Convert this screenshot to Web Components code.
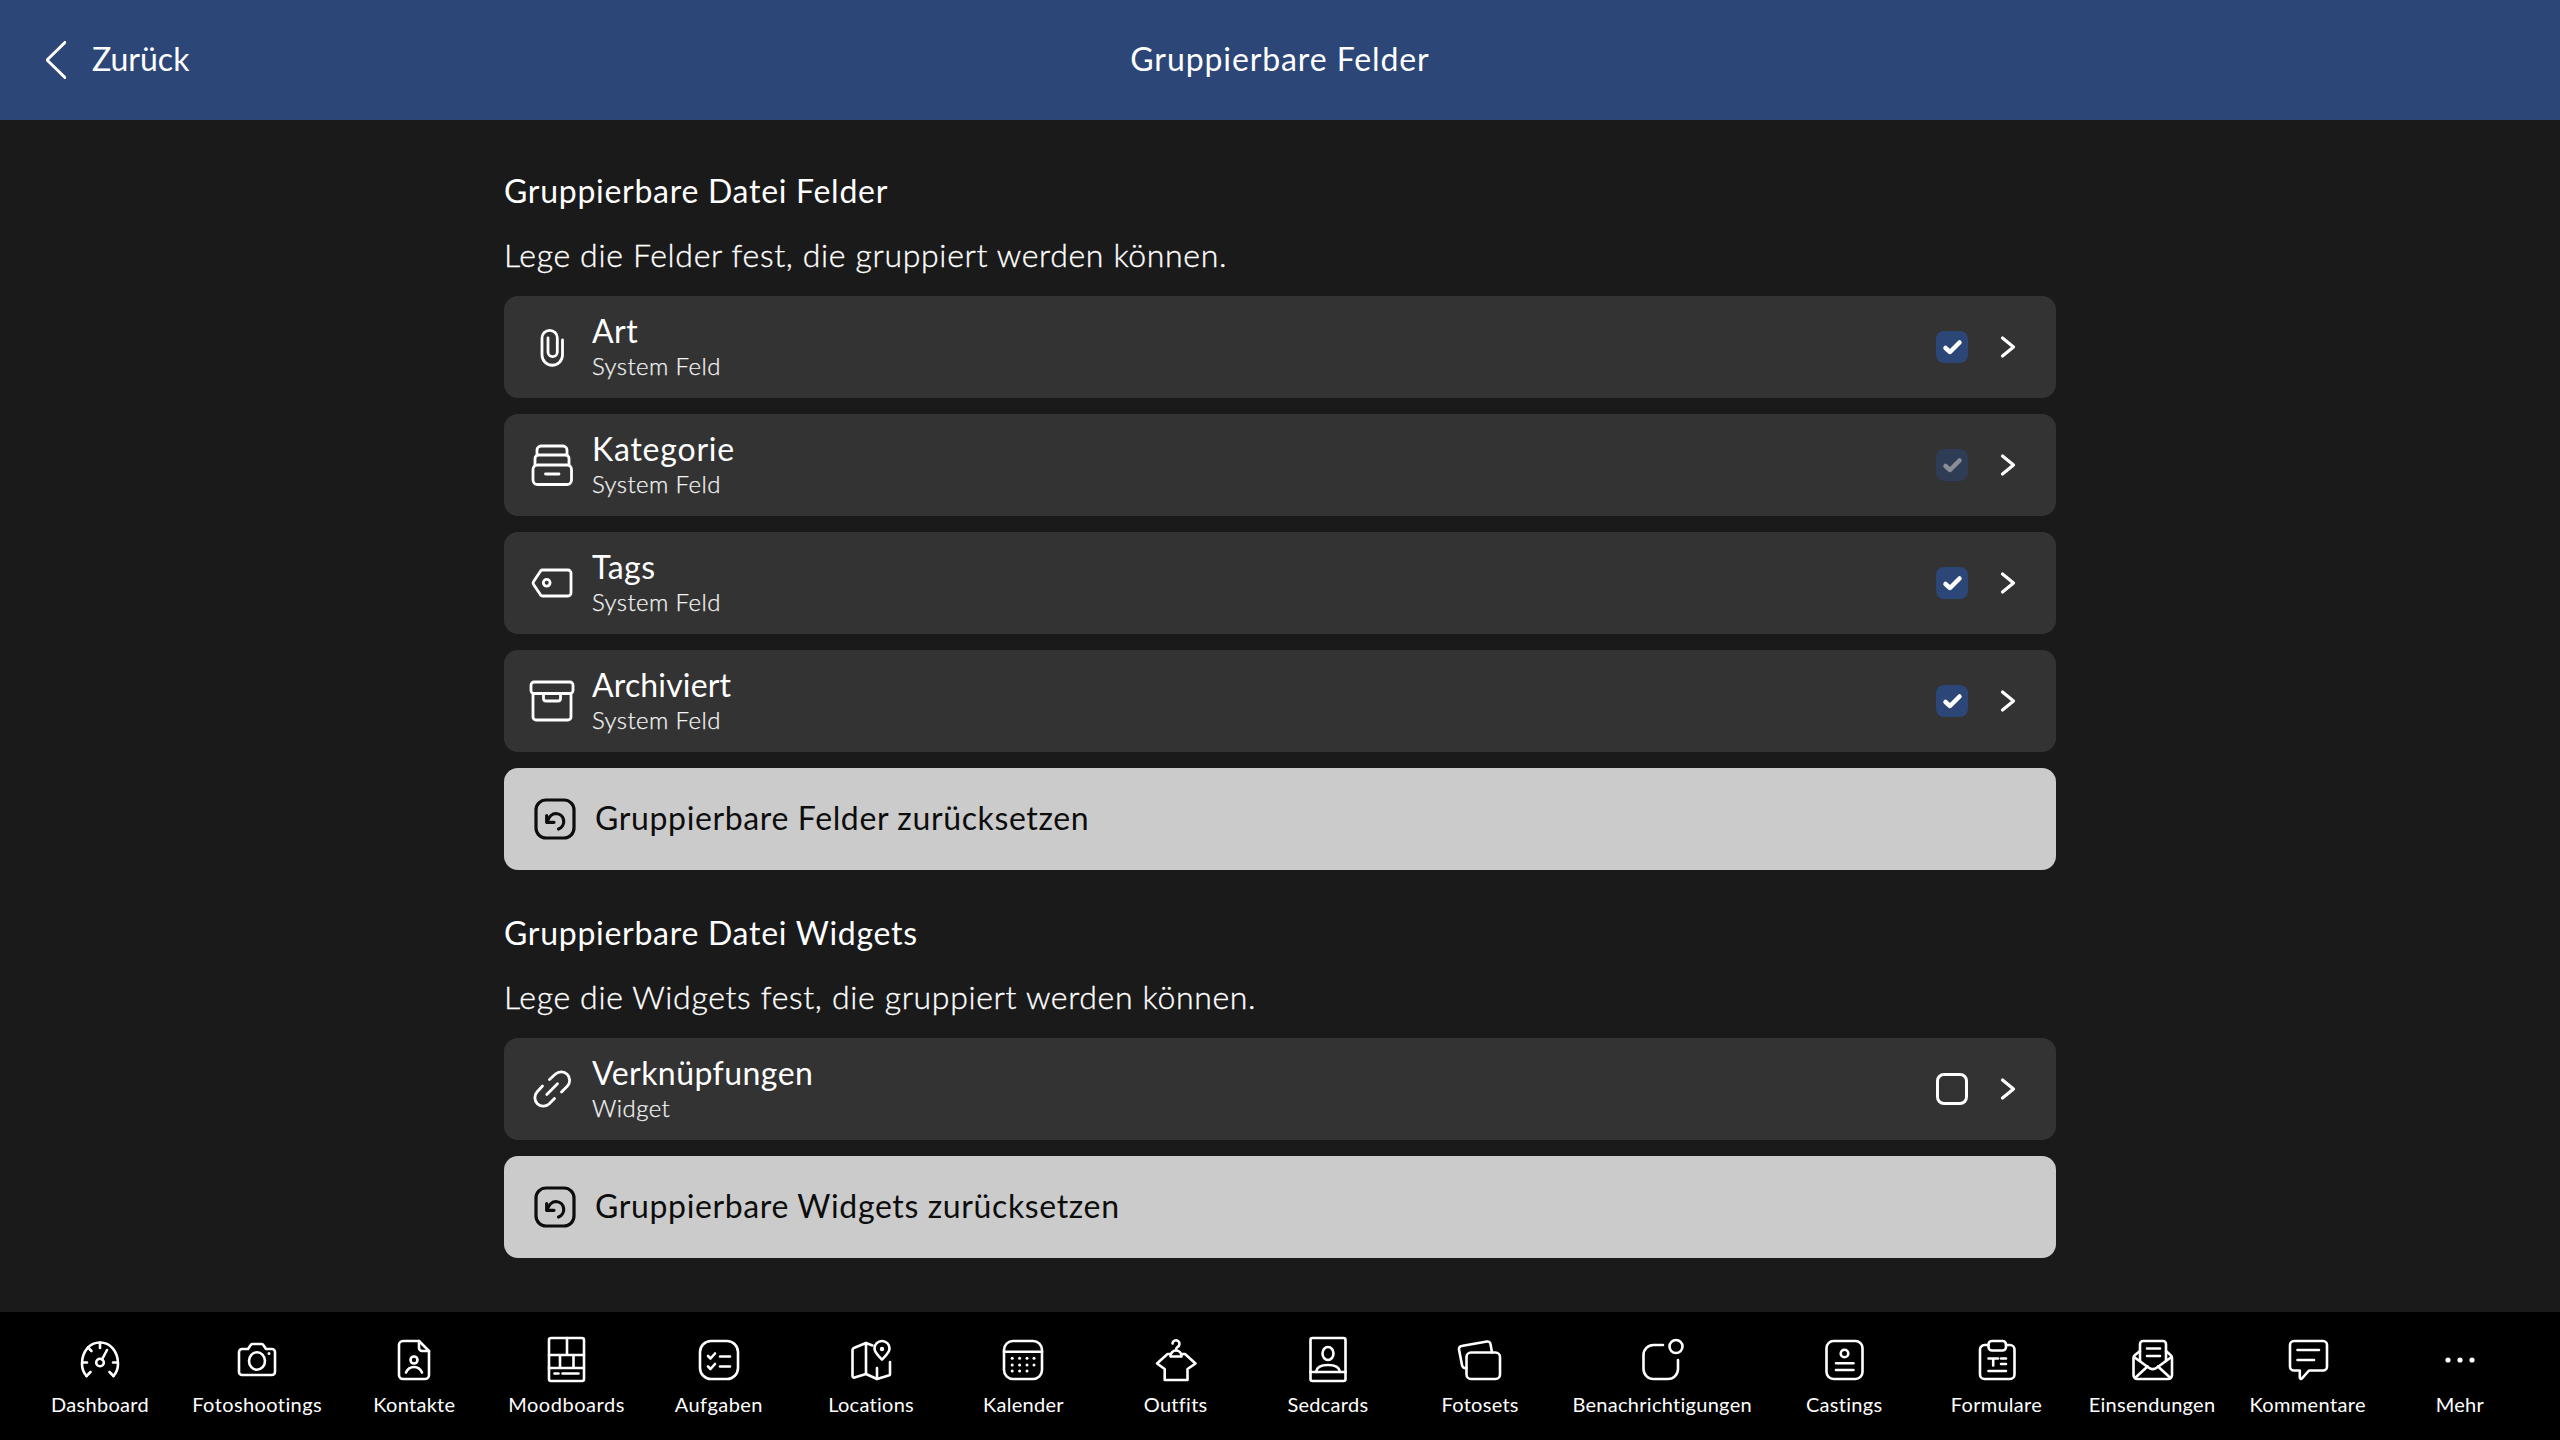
<!doctype html>
<html lang="de"><head><meta charset="utf-8"><title>Gruppierbare Felder</title>
<style>html,body{margin:0;height:100%;background:#1a1a1a;color:#fff;font-family:Lato,"Liberation Sans",sans-serif}
svg.i{width:48px;height:48px;display:block;overflow:visible;fill:none;stroke:currentColor;stroke-width:2.6;stroke-linecap:round;stroke-linejoin:round}
field-row svg.i{stroke-width:2.8}
svg.i .f{fill:currentColor;stroke:none}</style></head><body>
<app-shell>
  <top-bar slot="top" title-text="Gruppierbare Felder" back="Zurück"></top-bar>
  <settings-section heading="Gruppierbare Datei Felder" description="Lege die Felder fest, die gruppiert werden können.">
    <field-row label="Art" sub="System Feld" state="on"><svg class="i" viewBox="0 0 48 48"><path d="M34.5 17V32a10.25 10.25 0 0 1-20.5 0V15a7.65 7.65 0 0 1 15.3 0V29a4.65 4.65 0 0 1-9.3 0V15"/></svg></field-row>
    <field-row label="Kategorie" sub="System Feld" state="dim" style="--ls:.8px"><svg class="i" viewBox="0 0 48 48"><path d="M9 14V9a4 4 0 0 1 4-4H35a4 4 0 0 1 4 4V14"/><path d="M7 24V17.5a3.5 3.5 0 0 1 3.5-3.5H37.500a3.500 3.500 0 0 1 3.500 3.500V24"/><rect x="5" y="24" width="38.500" height="19.500" rx="4.500"/><path d="M17.500 33H31"/></svg></field-row>
    <field-row label="Tags" sub="System Feld" state="on"><svg class="i" viewBox="0 0 48 48"><path d="M14.500 11H40a3 3 0 0 1 3 3V34a3 3 0 0 1-3 3H14.500a2.500 2.500 0 0 1-1.900-.9L5.600 25.500a2.500 2.500 0 0 1 0-3L12.600 11.900A2.500 2.500 0 0 1 14.500 11z"/><circle cx="18.700" cy="23.800" r="3.400"/></svg></field-row>
    <field-row label="Archiviert" sub="System Feld" state="on" style="--ls:.15px"><svg class="i" viewBox="0 0 48 48"><rect x="3" y="5" width="42" height="11.500" rx="3"/><path d="M5 16.500V40a3 3 0 0 0 3 3H40a3 3 0 0 0 3-3V16.500"/><path d="M15.500 16.500V21.500a2.500 2.500 0 0 0 2.500 2.500H30a2.500 2.500 0 0 0 2.500-2.500V16.500"/></svg></field-row>
    <reset-button label="Gruppierbare Felder zurücksetzen"><svg class="i" viewBox="0 0 48 48" style="stroke-width:3.200"><rect x="5" y="5" width="38" height="38" rx="10"/><path d="M15.700 20.500V27.300H23"/><path d="M16 27C18 21.500 21 18.500 25 18.500A8 8 0 0 1 27.500 34"/></svg></reset-button>
  </settings-section>
  <settings-section heading="Gruppierbare Datei Widgets" description="Lege die Widgets fest, die gruppiert werden können.">
    <field-row label="Verknüpfungen" sub="Widget" state="off"><svg class="i" viewBox="0 0 48 48"><path d="M21.500 14.500L27.500 9a8.500 8.500 0 0 1 12 12L33.500 27"/><path d="M14.500 21L9 27a8.500 8.500 0 0 0 12 12L26.500 33.500"/><path d="M18.800 29.500L29.500 18.800"/></svg></field-row>
    <reset-button label="Gruppierbare Widgets zurücksetzen"><svg class="i" viewBox="0 0 48 48" style="stroke-width:3.200"><rect x="5" y="5" width="38" height="38" rx="10"/><path d="M15.700 20.500V27.300H23"/><path d="M16 27C18 21.500 21 18.500 25 18.500A8 8 0 0 1 27.500 34"/></svg></reset-button>
  </settings-section>
  <tab-bar slot="bottom">
    <tab-item label="Dashboard"><svg class="i" viewBox="0 0 48 48"><path d="M10.500 40C7.500 36.500 6 32 6 28 6 15 14 6.500 24 6.500S42 15 42 28c0 4-1.500 8.500-4.500 12"/><path d="M24 6.500V12M12 11.500L15.500 15M6.500 26.500H11M41.500 26.500H37M10.500 40L14.500 36M37.500 40L33.500 36"/><circle cx="24" cy="26.500" r="3.800"/><path d="M26 23.500L31 14"/></svg></tab-item>
    <tab-item label="Fotoshootings" style="--ls:.4px"><svg class="i" viewBox="0 0 48 48"><path d="M9 13H15L17.500 9.300A2.500 2.500 0 0 1 19.500 8H28.500A2.500 2.500 0 0 1 30.500 9.300L33 13H39A3 3 0 0 1 42 16V36A3 3 0 0 1 39 39H9A3 3 0 0 1 6 36V16A3 3 0 0 1 9 13Z"/><ellipse cx="24" cy="25" rx="8" ry="8.800"/><circle class="f" cx="36" cy="17.500" r="1.500"/></svg></tab-item>
    <tab-item label="Kontakte"><svg class="i" viewBox="0 0 48 48"><path d="M13 5H29L39 15V39A4 4 0 0 1 35 43H13A4 4 0 0 1 9 39V9A4 4 0 0 1 13 5Z"/><path d="M29 5V12A3 3 0 0 0 32 15H39"/><circle cx="24" cy="24" r="3.500"/><path d="M16 36.500C17.500 33 20.500 31 24 31S30.500 33 32 36.500"/></svg></tab-item>
    <tab-item label="Moodboards" style="--ls:.55px"><svg class="i" viewBox="0 0 48 48"><rect x="6" y="2" width="35" height="43" rx="2"/><path d="M6 19H41M6 32H41M24 2V19M17 19V32M30.500 19V32"/><path d="M11.500 37.500H15.500M19.500 37.500H35.500"/></svg></tab-item>
    <tab-item label="Aufgaben" style="--ls:.45px"><svg class="i" viewBox="0 0 48 48"><rect x="5" y="5" width="38" height="38" rx="11"/><path d="M13 20L15.500 22.500 20 17.500M13 30.500L15.500 33 20 28"/><path d="M25 20.500H35M25 30.500H35"/></svg></tab-item>
    <tab-item label="Locations"><svg class="i" viewBox="0 0 48 48"><path d="M19 7L8 11.500A3 3 0 0 0 5.500 14V40A1.500 1.500 0 0 0 7.500 41.500L19 38 30 43 41.500 39.500A1.500 1.500 0 0 0 43 38V26"/><path d="M19 7V38M30 43V32M19 7L25.500 9.500"/><path d="M35 23.500C31 19.500 27.500 16.500 27.500 12.500A7.500 7.500 0 0 1 42.500 12.500C42.500 16.500 39 19.500 35 23.500Z"/><circle class="f" cx="35" cy="13" r="2.200"/></svg></tab-item>
    <tab-item label="Kalender"><svg class="i" viewBox="0 0 48 48"><rect x="5" y="5" width="38" height="38" rx="9"/><path d="M5 15.700H43"/><g class="f"><circle cx="13.200" cy="22.300" r="1.500"/><circle cx="20.600" cy="22.300" r="1.500"/><circle cx="28" cy="22.300" r="1.500"/><circle cx="35" cy="22.300" r="1.500"/><circle cx="13.200" cy="29" r="1.500"/><circle cx="20.600" cy="29" r="1.500"/><circle cx="28" cy="29" r="1.500"/><circle cx="35" cy="29" r="1.500"/><circle cx="13.200" cy="35" r="1.500"/><circle cx="20.600" cy="35" r="1.500"/><circle cx="28" cy="35" r="1.500"/></g></svg></tab-item>
    <tab-item label="Outfits"><svg class="i" viewBox="0 0 48 48"><path d="M20.500 7.500A3.500 3.500 0 1 1 25.500 11C24.500 11.700 24 12.300 24 14"/><path d="M18.500 20.500C18.500 17 21 14.500 24 14.500S29.500 17 29.500 20.500Z"/><path d="M18.500 18H15.500L5 27.500 12.700 33V44H35.500V33L43.500 27.500 33 18H29.500"/></svg></tab-item>
    <tab-item label="Sedcards"><svg class="i" viewBox="0 0 48 48"><rect x="6.500" y="2" width="35" height="43" rx="2"/><ellipse cx="24" cy="17.500" rx="5.500" ry="6.500"/><path d="M6.500 36H41.500"/><path d="M12 36C12.500 31.500 17 29 24 29S35.500 31.500 36 36"/></svg></tab-item>
    <tab-item label="Fotosets"><svg class="i" viewBox="0 0 48 48"><rect x="10.500" y="16.500" width="33.500" height="26.500" rx="4.500"/><path d="M36 16.500L34.500 8A3 3 0 0 0 31 5.500L5.500 10A3 3 0 0 0 3 13.500L6 29A3.500 3.500 0 0 0 10.500 32"/></svg></tab-item>
    <tab-item label="Benachrichtigungen"><svg class="i" viewBox="0 0 48 48"><path d="M25 9H15.500A10 10 0 0 0 5.500 19V33A10 10 0 0 0 15.500 43H30A10 10 0 0 0 40 33V24"/><circle cx="38" cy="10.500" r="6.500"/></svg></tab-item>
    <tab-item label="Castings"><svg class="i" viewBox="0 0 48 48"><rect x="6.500" y="5" width="36" height="38" rx="7"/><circle cx="24.500" cy="17.500" r="3.800"/><path d="M16 27.300H33.500M16 34H33.500"/></svg></tab-item>
    <tab-item label="Formulare"><svg class="i" viewBox="0 0 48 48"><path d="M16.500 9H12.500A4.500 4.500 0 0 0 8 13.500V38.500A4.500 4.500 0 0 0 12.500 43H38A4.500 4.500 0 0 0 42.500 38.500V13.500A4.500 4.500 0 0 0 38 9H34"/><rect x="16.500" y="5" width="17.500" height="9.500" rx="3.500"/><path d="M16.500 22.500H26M21.200 22.500V29.500M29 22.500H34M29 28H34M16.500 35H34"/></svg></tab-item>
    <tab-item label="Einsendungen"><svg class="i" viewBox="0 0 48 48"><path d="M12 25V8A3 3 0 0 1 15 5H35A3 3 0 0 1 38 8V25"/><path d="M19 12.500H32M19 20H32"/><path d="M12 15L7 19A4 4 0 0 0 5.500 22V39A4 4 0 0 0 9.500 43H40A4 4 0 0 0 44 39V22A4 4 0 0 0 42.500 19L38 15"/><path d="M6 21L20.500 31.500A7 7 0 0 0 29 31.500L43.500 21"/><path d="M7 42L19.500 30.500M42.500 42L30 30.500"/></svg></tab-item>
    <tab-item label="Kommentare" style="--ls:.35px"><svg class="i" viewBox="0 0 48 48"><path d="M10 5H39A4 4 0 0 1 43 9V30.500A4 4 0 0 1 39 34.500H25L18 42.300C17 43.300 15.800 42.800 15.800 41.500V34.500H10A4 4 0 0 1 6 30.500V9A4 4 0 0 1 10 5Z"/><path d="M13.500 14H35M13.500 24H30"/></svg></tab-item>
    <tab-item label="Mehr"><svg class="i" viewBox="0 0 48 48"><g class="f"><circle cx="12" cy="24" r="2.600"/><circle cx="24" cy="24" r="2.600"/><circle cx="36" cy="24" r="2.600"/></g></svg></tab-item>
  </tab-bar>
</app-shell>
<script>
function def(name, css, html){
  customElements.define(name, class extends HTMLElement{
    connectedCallback(){
      if(this.shadowRoot) return;
      const r=this.attachShadow({mode:'open'});
      const a=n=>this.getAttribute(n)||'';
      r.innerHTML='<style>'+css+'</style>'+html(a);
    }
  });
}
def('app-shell',`
  :host{display:grid;grid-template-rows:120px 1fr 128px;height:100vh;width:100%;overflow:hidden}
  main{display:flex;flex-direction:column;align-items:center;padding-top:49px;gap:41px}
`,()=>`<slot name="top"></slot><main><slot></slot></main><slot name="bottom"></slot>`);
def('top-bar',`
  :host{display:grid;grid-template-columns:1fr auto 1fr;align-items:center;background:#2c4677;color:#fff;font-size:32px;padding:0 46px}
  .back{display:flex;align-items:center;gap:26px;line-height:44px}
  .back span{padding-bottom:2px}
  svg{width:20px;height:38px;display:block;fill:none;stroke:#fff;stroke-width:3;stroke-linecap:round;stroke-linejoin:round}
  .t{letter-spacing:.9px;line-height:44px;padding-bottom:3px}
`,a=>`<div class="back"><svg viewBox="0 0 20 38"><path d="M19.500 1L1 19 19.500 37"/></svg><span>${a('back')}</span></div><div class="t">${a('title-text')}</div><div></div>`);
def('settings-section',`
  :host{display:block;width:1552px}
  .h{font-size:32px;letter-spacing:.72px;line-height:44px;margin-bottom:20px;color:#fff}
  .d{font-size:32px;font-weight:300;-webkit-text-stroke:.35px #fff;letter-spacing:.66px;line-height:44px;margin-bottom:19px;color:#fff}
  .l{display:flex;flex-direction:column;gap:16px}
`,a=>`<div class="h">${a('heading')}</div><div class="d">${a('description')}</div><div class="l"><slot></slot></div>`);
def('field-row',`
  :host{display:flex;align-items:center;height:102px;box-sizing:border-box;background:#333;border-radius:14px;padding:0 36px 0 24px;color:#fff}
  .icon{flex:none;width:48px;height:48px;margin-right:16px}
  .txt{flex:1;min-width:0}
  .a{font-size:32px;letter-spacing:var(--ls,.45px);line-height:40px}
  .b{font-size:24px;font-weight:300;-webkit-text-stroke:.25px #f4f4f4;letter-spacing:.4px;line-height:30px;padding-bottom:2px;color:#f4f4f4}
  check-box{margin-right:28px}
  .chev{width:24px;height:24px;flex:none;fill:none;stroke:#fff;stroke-width:3.200;stroke-linecap:round;stroke-linejoin:round}
`,a=>`<div class="icon"><slot></slot></div><div class="txt"><div class="a">${a('label')}</div><div class="b">${a('sub')}</div></div><check-box state="${a('state')}"></check-box><svg class="chev" viewBox="0 0 24 24"><path d="M6.500 3L17.500 12 6.500 21"/></svg>`);
def('check-box',`
  :host{display:block;width:32px;height:32px;flex:none;box-sizing:border-box;border-radius:8px}
  :host([state=on]){background:#2c4677}
  :host([state=dim]){background:#2e3c55}
  :host([state=off]){border:3px solid #fff}
  svg{display:block;width:32px;height:32px;fill:none;stroke:#fff;stroke-width:4.500;stroke-linecap:round;stroke-linejoin:round}
  :host([state=dim]) svg{stroke:#8a8d94}
  :host([state=off]) svg{display:none}
`,()=>`<svg viewBox="0 0 32 32"><path d="M9.500 17L14 21 23.500 11.500"/></svg>`);
def('reset-button',`
  :host{display:flex;align-items:center;height:102px;box-sizing:border-box;background:#cbcbcb;border-radius:14px;padding:0 27px;color:#0d0d0d;font-size:32px;letter-spacing:.63px;gap:17px}
  .icon{flex:none;width:48px;height:48px}
  span{padding-bottom:3px;margin-left:-1px}
`,a=>`<div class="icon"><slot></slot></div><span>${a('label')}</span>`);
def('tab-bar',`
  :host{display:flex;background:#000;padding:0 24px;justify-content:space-between;color:#fff}
`,()=>`<slot></slot>`);
def('tab-item',`
  :host{display:flex;flex-direction:column;align-items:center;flex:none;min-width:120px;padding:24px 16px 0;box-sizing:content-box;color:#fff}
  .icon{width:48px;height:48px;margin-bottom:6px}
  .l{font-size:20px;line-height:28px;letter-spacing:var(--ls,.28px);white-space:nowrap}
`,a=>`<div class="icon"><slot></slot></div><div class="l">${a('label')}</div>`);
</script>
</body></html>
